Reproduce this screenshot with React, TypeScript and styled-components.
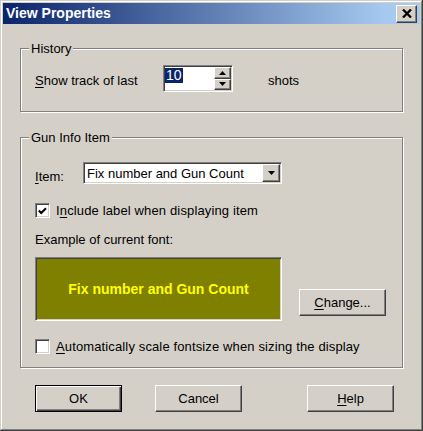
import React from 'react';
import styled, { createGlobalStyle, css } from 'styled-components';

const GlobalStyle = createGlobalStyle`
  html, body { margin: 0; padding: 0; background: #d4d0c8; }
  body {
    font-family: "Liberation Sans", Arial, sans-serif;
    font-size: 13px;
    line-height: 15px;
    color: #000;
  }
`;

const sunken = css`
  border: 1px solid;
  border-color: #808080 #ffffff #ffffff #808080;
  box-shadow: inset 1px 1px 0 #404040, inset -1px -1px 0 #d4d0c8;
`;

const raised = css`
  border: 1px solid;
  border-color: #ffffff #404040 #404040 #ffffff;
  box-shadow: inset -1px -1px 0 #808080, inset 1px 1px 0 #d4d0c8;
`;

const Window = styled.div`
  width: 423px;
  height: 431px;
  box-sizing: border-box;
  padding: 3px;
  background: #d4d0c8;
  box-shadow: inset -1px -1px 0 #404040, inset 1px 1px 0 #d4d0c8,
    inset -2px -2px 0 #808080, inset 2px 2px 0 #ffffff;
  display: flex;
  flex-direction: column;
`;

const TitleBar = styled.div`
  height: 21px;
  flex: none;
  display: flex;
  align-items: center;
  justify-content: space-between;
  padding: 0 3px;
  background: linear-gradient(to right, #0a246a 0%, #a6caf0 92%, #a6caf0 100%);
`;

const TitleText = styled.span`
  color: #ffffff;
  font-weight: bold;
  font-size: 14px;
  line-height: 17px;
`;

const CloseButton = styled.div`
  width: 21px;
  height: 18px;
  box-sizing: border-box;
  background: #d4d0c8;
  display: flex;
  align-items: center;
  justify-content: center;
  ${raised}
`;

const Body = styled.div`
  flex: 1;
  display: flex;
  flex-direction: column;
  padding: 17px 17px 0 17px;
`;

const Group = styled.fieldset<{ $mt?: number }>`
  margin: ${p => p.$mt ?? 0}px 0 0 0;
  padding: 0;
  border: 1px solid #808080;
  box-shadow: 1px 1px 0 #ffffff, inset 1px 1px 0 #ffffff;
  min-inline-size: 0;
`;

const Legend = styled.legend`
  margin-left: 8px;
  padding: 0 2px;
  line-height: 15px;
  background: #d4d0c8;
`;

const GroupBody = styled.div<{ $pt: number; $pb: number }>`
  display: flex;
  flex-direction: column;
  padding: ${p => p.$pt}px 0 ${p => p.$pb}px 14px;
`;

const Row = styled.div<{ $mt?: number; $align?: string }>`
  display: flex;
  align-items: ${p => p.$align ?? 'center'};
  margin-top: ${p => p.$mt ?? 0}px;
`;

const FieldLabel = styled.span<{ $w?: number; $dy?: number; $ml?: number; $ls?: number }>`
  flex: none;
  width: ${p => (p.$w ? `${p.$w}px` : 'auto')};
  padding-top: ${p => p.$dy ?? 0}px;
  margin-left: ${p => p.$ml ?? 0}px;
  letter-spacing: ${p => p.$ls ?? 0}px;
`;

const Key = styled.span`
  text-decoration: underline;
  text-underline-offset: 2px;
`;

const Spin = styled.div`
  width: 70px;
  height: 27px;
  box-sizing: border-box;
  display: flex;
  background: #ffffff;
  ${sunken}
`;

const SpinText = styled.div`
  flex: 1;
  padding: 2px 0 0 1px;
`;

const Selected = styled.span`
  display: inline-block;
  background: #0a246a;
  color: #ffffff;
  padding: 0 1px;
  font-size: 14px;
  line-height: 15px;
`;

const SpinButtons = styled.div`
  width: 17px;
  display: flex;
  flex-direction: column;
  padding: 1px 1px 1px 0;
`;

const SpinButton = styled.div`
  flex: 1;
  box-sizing: border-box;
  background: #d4d0c8;
  display: flex;
  align-items: center;
  justify-content: center;
  ${raised}
`;

const Combo = styled.div`
  width: 199px;
  height: 22px;
  box-sizing: border-box;
  display: flex;
  align-items: center;
  justify-content: space-between;
  background: #ffffff;
  padding: 1px;
  ${sunken}
`;

const ComboText = styled.span`
  padding-left: 2px;
`;

const DropButton = styled.div`
  width: 18px;
  height: 18px;
  box-sizing: border-box;
  background: #d4d0c8;
  display: flex;
  align-items: center;
  justify-content: center;
  ${raised}
`;

const CheckBox = styled.div`
  width: 15px;
  height: 15px;
  flex: none;
  box-sizing: border-box;
  background: #ffffff;
  display: flex;
  align-items: center;
  justify-content: center;
  ${sunken}
`;

const TextLine = styled.div<{ $mt?: number }>`
  margin-top: ${p => p.$mt ?? 0}px;
`;

const FontPreview = styled.div`
  width: 247px;
  height: 64px;
  flex: none;
  box-sizing: border-box;
  background: #808000;
  color: #ffff00;
  font-weight: bold;
  font-size: 14px;
  display: flex;
  align-items: center;
  justify-content: center;
  ${sunken}
`;

const Button = styled.button<{ $default?: boolean; $ml?: number; $mt?: number }>`
  width: 87px;
  height: 27px;
  flex: none;
  box-sizing: border-box;
  margin: ${p => p.$mt ?? 0}px 0 0 ${p => p.$ml ?? 0}px;
  padding: 0;
  font: inherit;
  color: #000;
  background: #d4d0c8;
  ${p =>
    p.$default
      ? css`
          border: 1px solid #000000;
          box-shadow: inset 1px 1px 0 #ffffff, inset -1px -1px 0 #404040,
            inset -2px -2px 0 #808080;
        `
      : raised}
`;

const ButtonRow = styled.div`
  display: flex;
  margin-top: 17px;
  padding-left: 15px;
`;

const Arrow = ({ up }: { up?: boolean }) => (
  <svg width="7" height="4" viewBox="0 0 7 4">
    <polygon points={up ? '3.5,0 7,4 0,4' : '0,0 7,0 3.5,4'} fill="#000" />
  </svg>
);

const CloseX = () => (
  <svg width="10" height="9" viewBox="0 0 10 9">
    <path d="M1 0.5 L9 8.5 M9 0.5 L1 8.5" stroke="#000" strokeWidth="2.3" fill="none" />
  </svg>
);

const Tick = () => (
  <svg width="9" height="8" viewBox="0 0 9 8">
    <polyline points="0.8,3.6 3.2,6 8,1.2" stroke="#000" strokeWidth="2.1" fill="none" />
  </svg>
);

export default function App() {
  return (
    <>
      <GlobalStyle />
      <Window>
        <TitleBar>
          <TitleText>View Properties</TitleText>
          <CloseButton>
            <CloseX />
          </CloseButton>
        </TitleBar>
        <Body>
          <Group>
            <Legend>History</Legend>
            <GroupBody $pt={9} $pb={19}>
              <Row>
                <FieldLabel $w={128} $dy={4}>
                  <Key>S</Key>how track of last
                </FieldLabel>
                <Spin>
                  <SpinText>
                    <Selected>10</Selected>
                  </SpinText>
                  <SpinButtons>
                    <SpinButton>
                      <Arrow up />
                    </SpinButton>
                    <SpinButton>
                      <Arrow />
                    </SpinButton>
                  </SpinButtons>
                </Spin>
                <FieldLabel $ml={35} $dy={4}>shots</FieldLabel>
              </Row>
            </GroupBody>
          </Group>

          <Group $mt={18}>
            <Legend>Gun Info Item</Legend>
            <GroupBody $pt={17} $pb={13}>
              <Row>
                <FieldLabel $w={48} $dy={6}>
                  <Key>I</Key>tem:
                </FieldLabel>
                <Combo>
                  <ComboText>Fix number and Gun Count</ComboText>
                  <DropButton>
                    <Arrow />
                  </DropButton>
                </Combo>
              </Row>
              <Row $mt={19}>
                <CheckBox>
                  <Tick />
                </CheckBox>
                <FieldLabel $ml={6} $ls={0.14}>
                  I<Key>n</Key>clude label when displaying item
                </FieldLabel>
              </Row>
              <TextLine $mt={14}>Example of current font:</TextLine>
              <Row $mt={10} $align="flex-start">
                <FontPreview>Fix number and Gun Count</FontPreview>
                <Button $ml={17} $mt={32}>
                  <Key>C</Key>hange...
                </Button>
              </Row>
              <Row $mt={18}>
                <CheckBox />
                <FieldLabel $ml={6} $ls={0.13}>
                  <Key>A</Key>utomatically scale fontsize when sizing the display
                </FieldLabel>
              </Row>
            </GroupBody>
          </Group>

          <ButtonRow>
            <Button $default>OK</Button>
            <Button $ml={33}>Cancel</Button>
            <Button $ml={65}>
              <Key>H</Key>elp
            </Button>
          </ButtonRow>
        </Body>
      </Window>
    </>
  );
}
